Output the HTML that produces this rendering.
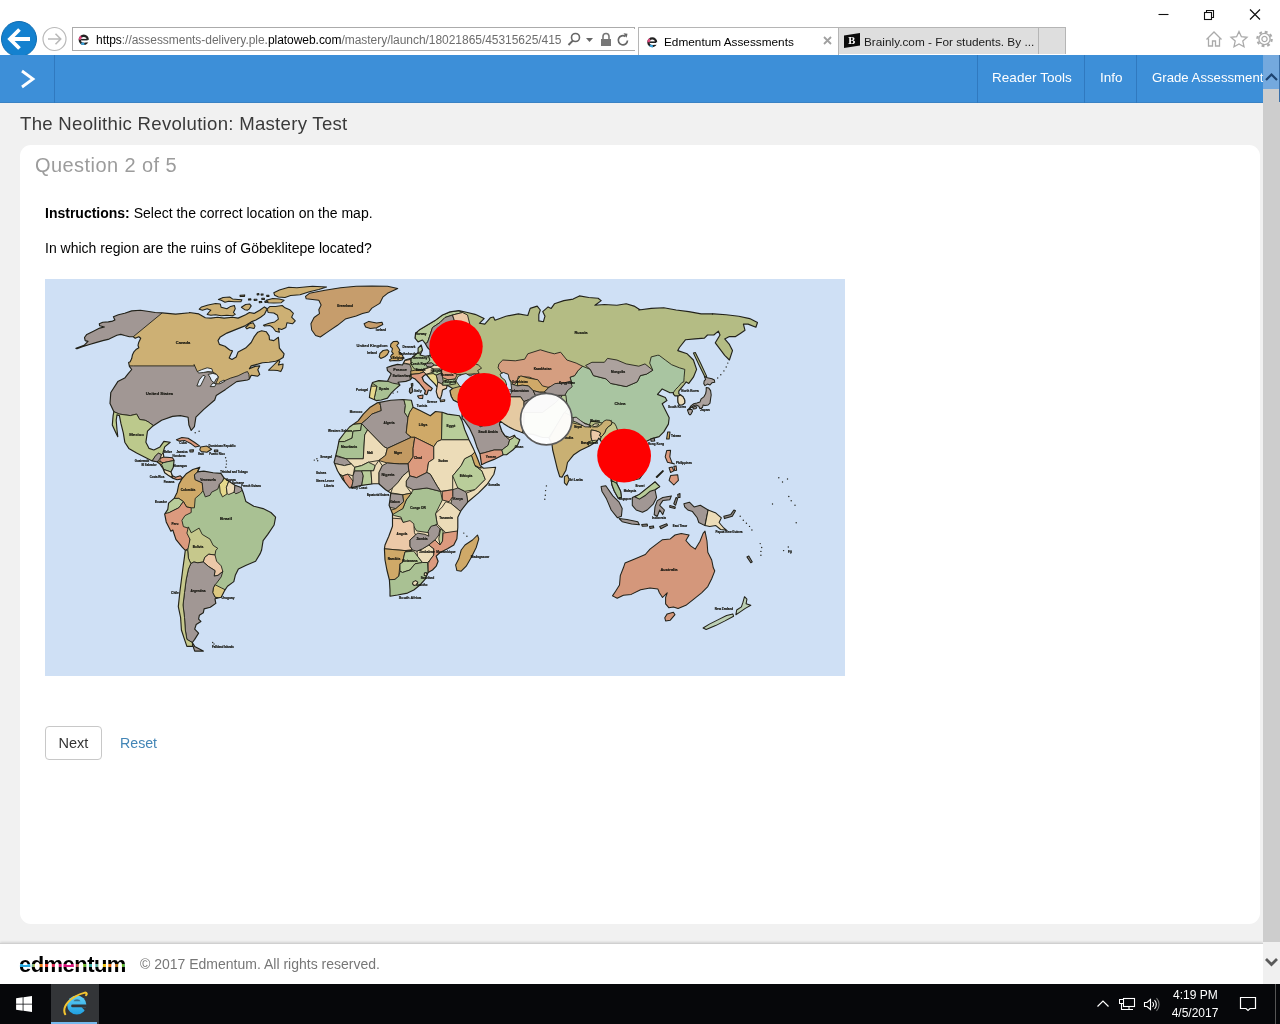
<!DOCTYPE html>
<html lang="en">
<head>
<meta charset="utf-8">
<title>Edmentum Assessments</title>
<style>
*{box-sizing:border-box;margin:0;padding:0}
html,body{width:1280px;height:1024px;overflow:hidden;background:#fff;font-family:"Liberation Sans",sans-serif}
.abs{position:absolute}
#chrome{position:absolute;left:0;top:0;width:1280px;height:56px;background:#fff}
#addr{position:absolute;left:72px;top:27px;width:563px;height:24px;border:1px solid #ababab;background:#fff}
#addr .url{position:absolute;left:23px;top:4.500px;font-size:12px;color:#6d6d6d;white-space:nowrap;letter-spacing:-0.04px}
#addr .url b{font-weight:normal;color:#000}
.tab{position:absolute;top:27px;height:29px;font-size:11.8px;color:#000;white-space:nowrap}
#tab1{left:638px;width:201px;background:#fff;border:1px solid #b5b5b5;border-bottom:none}
#tab2{left:839px;width:200px;background:#dedede;border:1px solid #b5b5b5;border-left:none;border-bottom:none;height:27px}
#tab3{left:1039px;width:27px;background:#dedede;border:1px solid #b5b5b5;border-left:none;border-bottom:none;height:27px}
#apphead{position:absolute;left:0;top:55px;width:1280px;height:48px;background:#3d8fd8;border-bottom:1px solid #3a82c4}
#apphead .it{position:absolute;top:0;height:48px;border-left:1px solid #3079bf;color:#fff;font-size:13.5px;line-height:46px;white-space:nowrap}
#pagebg{position:absolute;left:0;top:103px;width:1263px;height:840px;background:#f1f1f1}
#title{position:absolute;left:20px;top:112.6px;font-size:18.6px;color:#3a3a3a;white-space:nowrap;letter-spacing:0.28px}
#card{position:absolute;left:20px;top:145px;width:1240px;height:779px;background:#fff;border-radius:11px}
#qn{position:absolute;left:35px;top:153.5px;font-size:20px;color:#9c9c9c;white-space:nowrap;letter-spacing:0.43px}
.q{position:absolute;left:45px;font-size:14px;color:#000;white-space:nowrap}
#map{position:absolute;left:45px;top:279px;width:800px;height:397px;background:#cfe0f5;overflow:hidden}
#next{position:absolute;left:45px;top:726px;width:57px;height:34px;border:1px solid #c8c8c8;border-radius:4px;background:#fff;font-size:14.5px;color:#333;text-align:center;line-height:32px}
#reset{position:absolute;left:120px;top:735px;font-size:14.2px;color:#4285b6}
#footer{position:absolute;left:0;top:943px;width:1263px;height:41px;background:#fff;border-top:1px solid #d0d0d0;box-shadow:0 -1px 2px rgba(0,0,0,.12)}
#logo{position:absolute;left:19px;top:8.5px;font-size:22px;font-weight:bold;color:#000;letter-spacing:-0.55px;line-height:24px}
#copy{position:absolute;left:140px;top:12px;font-size:14px;color:#777;white-space:nowrap}
#sb{position:absolute;left:1263px;top:55px;width:17px;height:929px;background:#f0f0f0}
#task{position:absolute;left:0;top:984px;width:1280px;height:40px;background:#06070a}
#task .t{position:absolute;color:#fff;font-size:12px;white-space:nowrap}
</style>
</head>
<body>
<div id="chrome">
  <!-- back / forward -->
  <svg class="abs" style="left:0;top:19px" width="72" height="40" viewBox="0 0 72 40">
    <circle cx="19" cy="20" r="17.5" fill="#1481cf" stroke="#0f6cb0" stroke-width="1"/>
    <path d="M30 20H11M19.500 10.500l-9.500 9.500 9.500 9.500" fill="none" stroke="#fff" stroke-width="3.800" stroke-linecap="butt" stroke-linejoin="miter"/>
    <circle cx="54.5" cy="20" r="11.5" fill="#fff" stroke="#b9b9b9" stroke-width="1.2"/>
    <path d="M48 20h12.5M55.5 14.8l5.2 5.2-5.2 5.2" fill="none" stroke="#b9b9b9" stroke-width="1.6"/>
  </svg>
  <div id="addr">
    <svg class="abs" style="left:5px;top:6px" width="11.500" height="11.500" viewBox="0 0 15 15"><circle cx="7.5" cy="7.5" r="5.2" fill="none" stroke="#222" stroke-width="3"/><rect x="7" y="7.6" width="8" height="3.4" fill="#fff"/><rect x="4" y="6.4" width="8.5" height="2" fill="#222"/><path d="M2.3 7.5a5.2 5.2 0 0 1 2-4" stroke="#e0457b" stroke-width="3" fill="none"/><path d="M4.3 12a5.2 5.2 0 0 0 4 .6" stroke="#3aa3dc" stroke-width="3" fill="none"/></svg>
    <div class="url"><b>https</b>://assessments-delivery.ple.<b>platoweb.com</b>/mastery/launch/18021865/45315625/415</div>
    <div class="abs" style="left:488px;top:1px;width:74px;height:21px;background:#fff"></div>
    <svg class="abs" style="left:493px;top:3px" width="68" height="18" viewBox="0 0 68 18">
      <circle cx="9.5" cy="6.5" r="4" fill="none" stroke="#666" stroke-width="1.6"/><path d="M6.8 9.6L2.5 14" stroke="#666" stroke-width="2"/>
      <path d="M20 7h7l-3.5 4z" fill="#666"/>
      <rect x="35" y="8" width="10" height="7" fill="#777"/><path d="M37 8V5.5a3 3 0 0 1 6 0V8" fill="none" stroke="#777" stroke-width="1.6"/>
      <path d="M61.5 9.5a4.6 4.6 0 1 1-2-4" fill="none" stroke="#666" stroke-width="1.7"/><path d="M57.5 2.2l4 .6-.8 4z" fill="#666"/>
    </svg>
  </div>
  <div class="tab" id="tab1">
    <svg class="abs" style="left:7px;top:8px" width="12.500" height="12.500" viewBox="0 0 15 15"><circle cx="7.5" cy="7.5" r="4.6" fill="none" stroke="#222" stroke-width="2.8"/><rect x="7" y="7.6" width="8" height="3" fill="#fff"/><rect x="4" y="6.5" width="8" height="1.9" fill="#222"/><path d="M2.9 7.5a4.6 4.6 0 0 1 1.8-3.6" stroke="#e0457b" stroke-width="2.8" fill="none"/><path d="M4.6 11.4a4.6 4.6 0 0 0 3.6.6" stroke="#3aa3dc" stroke-width="2.8" fill="none"/></svg>
    <span class="abs" style="left:25px;top:7px">Edmentum Assessments</span>
    <svg class="abs" style="left:184px;top:8px" width="9" height="9" viewBox="0 0 9 9"><path d="M1 1l7 7M8 1L1 8" stroke="#a0a0a0" stroke-width="1.8"/></svg>
  </div>
  <div class="tab" id="tab2">
    <svg class="abs" style="left:5px;top:5px" width="17" height="15" viewBox="0 0 17 15"><path d="M0 2.5L16 0v12.5L0 15z" fill="#0b0b0b"/><text x="4.3" y="11.3" font-family="Liberation Serif,serif" font-weight="bold" font-size="10.5" fill="#fff">B</text></svg>
    <span class="abs" style="left:25px;top:7px;color:#1a1a1a">Brainly.com - For students. By ...</span>
  </div>
  <div class="tab" id="tab3"></div>
  <!-- window controls -->
  <svg class="abs" style="left:1150px;top:4px" width="125" height="22" viewBox="0 0 125 22">
    <path d="M8.5 10.5h10" stroke="#111" stroke-width="1.1"/>
    <rect x="54.5" y="8.5" width="7" height="7" fill="none" stroke="#111" stroke-width="1.1"/><path d="M56.5 8.5v-2h7v7h-2" fill="none" stroke="#111" stroke-width="1.1"/>
    <path d="M100 5.5l10 10M110 5.5l-10 10" stroke="#111" stroke-width="1.2"/>
  </svg>
  <!-- home star gear -->
  <svg class="abs" style="left:1204px;top:29px" width="72" height="20" viewBox="0 0 72 20">
    <path d="M2.5 10.5L10 3l7.500 7.500M4.500 9.500V17h4v-5h3v5h4V9.500" fill="none" stroke="#aaa" stroke-width="1.3"/>
    <path d="M35 2.500l2.400 5.200 5.600.6-4.200 3.800 1.200 5.600L35 14.900l-5 2.800 1.200-5.600L27 8.300l5.600-.6z" fill="none" stroke="#aaa" stroke-width="1.3" stroke-linejoin="miter"/>
    <g transform="translate(60.500 10)" fill="none" stroke="#aaa"><circle r="2.600" stroke-width="1.300"/><circle r="5.600" stroke-width="1.300"/><circle r="7.200" stroke-width="2.200" stroke-dasharray="2.830 2.830"/></g>
  </svg>
</div>

<div id="apphead">
  <svg class="abs" style="left:19px;top:14px" width="18" height="20" viewBox="0 0 18 20"><path d="M3 2l11 8-11 8" fill="none" stroke="#fff" stroke-width="2.800"/></svg>
  <div class="it" style="left:54px;width:1px"></div>
  <div class="it" style="left:977px;width:107px;padding-left:14px;letter-spacing:0.050px">Reader Tools</div>
  <div class="it" style="left:1084px;width:52px;padding-left:15px">Info</div>
  <div class="it" style="left:1136px;width:127px;padding-left:15px;overflow:hidden;font-size:13.2px">Grade Assessment</div>
</div>

<div id="pagebg"></div>
<div id="title">The Neolithic Revolution: Mastery Test</div>
<div id="card"></div>
<div id="qn">Question 2 of 5</div>
<div class="q" style="top:205px"><b>Instructions:</b> Select the correct location on the map.</div>
<div class="q" style="top:240px">In which region are the ruins of Göbeklitepe located?</div>

<div id="map">
<svg width="800" height="397" viewBox="45 279 800 397" style="position:absolute;left:0;top:0">
<rect x="45" y="279" width="800" height="397" fill="#cfe0f5"/>
<defs>
<clipPath id="cna"><path d="M75.9 348.4L84.1 345.3L88 341.4L85.2 340.6L84.5 337.5L86.8 334.4L93.4 331.2L99.7 328.1L104.4 327L99.7 325.8L99.3 323.8L102.8 322.3L108.3 321.9L112.6 321.1L114.9 319.9L113.4 316.8L118.4 314.8L124.7 313.3L131.7 310.9L140.3 310.2L147.3 311.3L155.2 312.5L162.2 312.9L175.6 314.1L189.7 312.8L189.4 312.5L198.8 313.9L205.3 317.7L210.9 318.1L217.5 317.2L224.1 318.1L232.5 317.2L238.1 318.1L245.6 314.8L249.4 312.5L254.1 313.4L259.7 310.2L264.4 306.9L267.2 308.8L264.4 314.4L260.6 317.2L255.9 320L251.2 321.9L245.6 325.6L236.2 329.4L226.9 333.1L220.3 336.9L218 340.6L219.4 344.4L225 346.2L229.7 350L232.5 350.9L230.6 354.7L229.2 358L232 359.4L236.2 357L238.1 351.9L245.6 348.1L251.2 342.5L254.1 336.9L257.8 332.2L261.6 330.8L266.2 331.7L269.1 335.9L269.5 339.7L273.8 340.6L278.4 337.3L278.9 342.5L279.4 348.1L284.1 353.8L283.1 357.5L279.4 359.8L275.6 361.2L269.1 362.2L262.5 362.7L257.8 364.1L251.2 365.9L249.4 368.8L255 366.4L259.7 365.9L257.8 369.7L259.7 374.4L257.8 376.2L251.2 375.3L249.4 379.1L247.5 380L236.6 381.6L225.6 389.4L216.2 395.6L214.7 400L203.8 409.4L195.9 417.2L194.4 426.6L191.2 430.5L188.9 425L188.1 417.2L180.3 415.6L172.5 416.4L161.6 420.3L152.2 426.6L147.5 431.2L145.9 442.2L149.1 448.4L153.8 450L160 446.9L163.9 441.4L170.2 442.2L164.7 446.9L163.1 452.3L163.9 457L172.5 457.8L174.1 460.2L173.3 467.2L170.9 471.9L172.5 475.8L175.6 477.3L180.3 475.8L182.7 478.1L181.9 478.9L177.2 479.7L172.5 478.1L167.8 475L164.7 472.7L163.1 468.8L160 464.1L156.9 461.7L152.2 460.9L145.9 457.8L136.6 453.1L128.8 448.4L124.8 442.2L123.3 432.8L120.9 423.4L119.4 415.6L117 414.8L116.2 420.3L117 429.7L117.8 436.7L116.2 433.6L112.3 425L113.1 415.6L113.9 411.7L110 403.4L110.8 392.5L117.8 381.6L124.7 378.1L127.8 374.2L131.7 369.5L129.4 366.4L128.6 362.5L130.2 361.7L131.7 358.6L132.5 354.7L134.1 351.6L136.4 349.2L138.8 347.7L138 345.3L138.8 342.2L140.7 338.3L138.8 336.7L135.2 338.3L133.3 336.7L129.4 336.7L124.7 335.5L120.8 334.4L116.9 335.2L113.8 336.7L109.1 339.1L102.8 340.6L95.8 342.6L89.5 344.5L81.7 346.9L77 348.8Z"/></clipPath>
<clipPath id="csa"><path d="M181.9 478.9L186.6 473.4L192.8 469.5L199.8 467.2L197.5 471.9L203.8 471.1L213.1 472.7L220.9 473.4L224.1 478.1L228.8 481.2L235 485.2L241.2 487.5L243.6 493.8L245.9 501.6L253.8 506.2L263.1 508.6L270.9 512.5L275.6 517.2L274.1 525L267.8 534.4L263.1 540.6L261.6 550L260.3 553.4L255.6 561.2L246.2 565.2L238.4 569.1L235.3 575.3L233.8 581.6L227.5 586.2L224.4 590.9L221.2 597.2L215 598.8L215.8 603.4L210.3 607.3L204.1 608.9L203.3 612.8L199.4 615.2L198.6 619.1L200.9 621.4L196.2 624.5L194.7 629.2L198.6 633.1L194.7 639.4L192.3 642.5L194.7 646.4L203.3 651.1L194.7 651.1L193.1 646.4L186.9 646.4L184.5 639.4L181.4 630L180.6 617.5L178.3 606.6L179.8 592.5L181.4 580L183 567.5L184.5 556.6L185.3 550.3L182.2 547.2L175.9 539.4L172.8 530L170.9 531.2L166.2 521.9L164.7 514.1L167.8 509.4L168.6 503.1L174.1 498.4L177.2 492.2L178.8 484.4Z"/></clipPath>
<clipPath id="caf"><path d="M377 402.9L390.8 400.3L402.8 399.5L411.4 400.3L413.1 407.2L420 410.6L430.3 415.8L435.5 411.5L442.3 412.3L447.5 414.1L459.5 415.8L462.1 420.9L464.7 429.5L469 439.8L473.3 448.4L477.6 458.8L480.2 465.6L483.6 468.2L495.6 467.3L493.9 474.2L487 484.5L478.4 493.1L468.1 501.7L461.2 510.3L457.8 517.2L457.8 527.5L457.5 531.2L456.9 538.8L453.8 545L447.5 548.8L440 552.5L436.2 556.2L438.1 561.2L436.2 566.2L432.5 570L428.1 572.5L425 579.4L420 585L413.8 590L407.5 593.1L397.5 595L390 596.2L390 590L389.4 580L386.9 570L385 560L384.4 548.8L385 545L388.8 536.2L392.5 526.2L392.5 515L392.5 513.8L389.1 505.2L389.9 500L390.8 493.1L385.6 489.7L378.8 483.7L373.6 483.7L361.6 485.4L349.5 488L342.7 479.4L337.5 470.8L334.1 462.2L335.8 455.3L337.5 448.4L339.2 439.8L344.4 433L349.5 427L358.1 420.9L363.3 414.1L370.2 407.2Z"/></clipPath>
<clipPath id="ceu"><path d="M376.2 400.6L369.4 397.5L370 392.5L371.2 386.2L372.5 382.5L378.8 380.6L387.5 381.2L391.2 373.8L387.5 370.6L386.9 367.5L392.5 365.6L397.5 364.4L402.5 365L405 360L411.9 358.1L412.5 356.9L418.1 352.5L418.1 348.1L421.2 345L422.5 350L420 355L425 356.2L430 355.6L430 350L427.5 347.5L425 343.1L422.5 340L418.1 341.9L415 338.1L415.6 333.1L420 329.4L427.5 325L435 320.6L442.5 315L450 311.9L458.8 310.6L467.5 312.5L475 314.4L476.2 314.7L484.1 318.6L479.4 323.3L484.8 324.1L490.3 317.8L493.4 317L495 320.2L505.9 316.2L518.4 313.9L527.8 315.5L530.2 308.4L537.2 306.1L540.3 310L538.8 314.7L538.8 320.9L543.4 321.7L545 316.2L542.7 311.6L548.1 306.9L551.2 308.4L554.4 303.8L563.8 300.6L573.1 299.1L579.4 295.9L588.8 297.5L598.1 298.3L601.2 300.6L595 305.3L604.4 304.5L616.9 305.3L626.2 303.8L634.1 306.1L640.3 310L638.8 310L651.2 308.4L663.8 307.7L676.2 310L688.8 311.6L701.2 313.9L713.8 313.9L726.2 314.7L738.8 316.2L749.7 318.6L757.5 322.5L755.9 327.2L748.1 324.1L743.4 324.1L745 330.3L740.3 333.4L735.6 336.6L729.4 336.6L724.7 338.9L729.4 344.4L732.5 350.6L729.4 360L724.7 355.3L720 349.1L715.3 342.8L720 335L718.4 331.1L713.8 335L707.5 335L704.4 338.1L695 338.9L685.6 339.7L679.4 347.5L677.8 350.6L687.2 353.8L693.4 360L696.6 369.4L693.4 377.2L688.8 383.4L686.2 381.9L683.8 385L681.2 388.1L678.8 391.2L678.8 393.8L680.6 395L683.1 396.9L684.7 400L684.7 403.1L682.5 404.7L679.4 405L678.1 402.5L677.8 398.8L678.1 395.9L675 395.9L673.4 394.1L673.4 392.5L670 392.8L662.2 388.9L657.5 394.4L665.3 397.5L666.9 400.6L662.2 403.8L665.3 410L669.2 417.8L668.4 424.1L663.8 431.9L659.1 436.6L651.2 438.9L646.6 441.2L642.5 443.6L637.8 445.9L634.7 450.6L637.8 456.9L642.5 463.1L644.1 472.5L639.4 478.8L633.1 480.3L631.6 475.6L626.9 472.5L623.8 469.4L620.6 472.5L617.5 478.8L616.7 483.4L620.6 491.2L621.4 497.5L618.3 498.3L614.4 491.2L612 485L611.2 480.3L609.7 472.5L608.1 464.7L606.6 456.9L603.4 449.1L601.1 441.2L598.8 438.1L597.2 441.2L589.4 445.9L580 450.6L573.8 454.7L567.5 462.5L565.9 470.3L562 477.3L559.7 476.6L557.3 468.8L555 459.4L552.7 450L551.9 443.8L548.8 437.5L542.5 437.5L533.1 434.4L525.3 433.6L520.6 432L514.4 429.7L508.1 426.6L503.4 423.4L500.3 421.1L499.5 424.2L501.9 431.2L505 435.9L509.7 437.5L514.4 435.2L515.9 437.5L519.8 439.8L517.5 445.3L512.8 450L506.6 454.7L503.4 454.7L494.1 459.4L486.2 462.5L481.6 464.8L480 453.9L476.9 446.9L473.8 437.5L469.4 428.1L463.6 419.5L462 418.8L462 414.1L465.9 406.2L468.3 398.4L458.1 402.5L453.4 400.2L451.1 396.2L449.9 390.8L452.7 388.4L447.2 385.3L446.4 388.4L442.5 390L441.7 394.7L440.2 399.4L437.8 397L436.2 391.6L437 386.9L434.7 383.8L430 379.1L426.1 374.4L424.5 375.2L422.2 377.5L423.8 381.4L428.4 385.3L432.3 388.4L430.8 390.8L428.4 390L426.9 394.7L424.5 393.9L425.3 390.8L422.2 386.9L419.1 383L415.2 379.1L412 377.5L410.5 379.8L405.8 381.4L398 382.2L400 385L395 389.4L391.2 393.1L387.5 398.1L381.2 400Z"/></clipPath>
</defs>
<g stroke="#22221a" stroke-width="0.9" stroke-linejoin="round">
<g clip-path="url(#ceu)"><path d="M376.2 400.6L369.4 397.5L370 392.5L371.2 386.2L372.5 382.5L378.8 380.6L387.5 381.2L391.2 373.8L387.5 370.6L386.9 367.5L392.5 365.6L397.5 364.4L402.5 365L405 360L411.9 358.1L412.5 356.9L418.1 352.5L418.1 348.1L421.2 345L422.5 350L420 355L425 356.2L430 355.6L430 350L427.5 347.5L425 343.1L422.5 340L418.1 341.9L415 338.1L415.6 333.1L420 329.4L427.5 325L435 320.6L442.5 315L450 311.9L458.8 310.6L467.5 312.5L475 314.4L476.2 314.7L484.1 318.6L479.4 323.3L484.8 324.1L490.3 317.8L493.4 317L495 320.2L505.9 316.2L518.4 313.9L527.8 315.5L530.2 308.4L537.2 306.1L540.3 310L538.8 314.7L538.8 320.9L543.4 321.7L545 316.2L542.7 311.6L548.1 306.9L551.2 308.4L554.4 303.8L563.8 300.6L573.1 299.1L579.4 295.9L588.8 297.5L598.1 298.3L601.2 300.6L595 305.3L604.4 304.5L616.9 305.3L626.2 303.8L634.1 306.1L640.3 310L638.8 310L651.2 308.4L663.8 307.7L676.2 310L688.8 311.6L701.2 313.9L713.8 313.9L726.2 314.7L738.8 316.2L749.7 318.6L757.5 322.5L755.9 327.2L748.1 324.1L743.4 324.1L745 330.3L740.3 333.4L735.6 336.6L729.4 336.6L724.7 338.9L729.4 344.4L732.5 350.6L729.4 360L724.7 355.3L720 349.1L715.3 342.8L720 335L718.4 331.1L713.8 335L707.5 335L704.4 338.1L695 338.9L685.6 339.7L679.4 347.5L677.8 350.6L687.2 353.8L693.4 360L696.6 369.4L693.4 377.2L688.8 383.4L686.2 381.9L683.8 385L681.2 388.1L678.8 391.2L678.8 393.8L680.6 395L683.1 396.9L684.7 400L684.7 403.1L682.5 404.7L679.4 405L678.1 402.5L677.8 398.8L678.1 395.9L675 395.9L673.4 394.1L673.4 392.5L670 392.8L662.2 388.9L657.5 394.4L665.3 397.5L666.9 400.6L662.2 403.8L665.3 410L669.2 417.8L668.4 424.1L663.8 431.9L659.1 436.6L651.2 438.9L646.6 441.2L642.5 443.6L637.8 445.9L634.7 450.6L637.8 456.9L642.5 463.1L644.1 472.5L639.4 478.8L633.1 480.3L631.6 475.6L626.9 472.5L623.8 469.4L620.6 472.5L617.5 478.8L616.7 483.4L620.6 491.2L621.4 497.5L618.3 498.3L614.4 491.2L612 485L611.2 480.3L609.7 472.5L608.1 464.7L606.6 456.9L603.4 449.1L601.1 441.2L598.8 438.1L597.2 441.2L589.4 445.9L580 450.6L573.8 454.7L567.5 462.5L565.9 470.3L562 477.3L559.7 476.6L557.3 468.8L555 459.4L552.7 450L551.9 443.8L548.8 437.5L542.5 437.5L533.1 434.4L525.3 433.6L520.6 432L514.4 429.7L508.1 426.6L503.4 423.4L500.3 421.1L499.5 424.2L501.9 431.2L505 435.9L509.7 437.5L514.4 435.2L515.9 437.5L519.8 439.8L517.5 445.3L512.8 450L506.6 454.7L503.4 454.7L494.1 459.4L486.2 462.5L481.6 464.8L480 453.9L476.9 446.9L473.8 437.5L469.4 428.1L463.6 419.5L462 418.8L462 414.1L465.9 406.2L468.3 398.4L458.1 402.5L453.4 400.2L451.1 396.2L449.9 390.8L452.7 388.4L447.2 385.3L446.4 388.4L442.5 390L441.7 394.7L440.2 399.4L437.8 397L436.2 391.6L437 386.9L434.7 383.8L430 379.1L426.1 374.4L424.5 375.2L422.2 377.5L423.8 381.4L428.4 385.3L432.3 388.4L430.8 390.8L428.4 390L426.9 394.7L424.5 393.9L425.3 390.8L422.2 386.9L419.1 383L415.2 379.1L412 377.5L410.5 379.8L405.8 381.4L398 382.2L400 385L395 389.4L391.2 393.1L387.5 398.1L381.2 400Z" fill="#b4bc84" stroke="none"/>
<path d="M582.5 366.2L590.3 369.4L593.4 375.6L605.9 378.8L610.6 383.4L626.2 386.6L637.2 381.9L640.3 375.6L646.6 374.1L652.8 370.2L649.7 363.1L651.2 356.9L657.5 355.3L659.1 355.3L665.3 360L671.6 364.7L679.4 367.8L684.8 369.4L684.1 377.2L683.8 381.9L681.9 382.5L678.8 386.2L675.6 389.4L673.4 392.5L672.5 403.8L685.6 456.9L626.9 456.9L603.4 449.1L612.8 425L611.2 420.3L605 423.4L590.9 421.1L589.4 425L573.8 418.8L570.6 415.6L564.4 395.3L571.6 382.7L570 377.2L574.7 375.6L577.8 370.9Z" fill="#a9c5a1"/>
<path d="M585.6 365.5L591.9 362.3L604.4 362.3L607.5 358.4L616.9 360L626.2 363.9L638.8 366.2L645 363.9L652.8 370.2L646.6 374.1L640.3 375.6L637.2 381.9L626.2 386.6L610.6 383.4L605.9 378.8L593.4 375.6L590.3 369.4Z" fill="#aca29e"/>
<path d="M498.9 363.9L502.8 360L515.3 360.8L524.7 359.2L527.8 353.8L540.3 349.8L548.1 352.2L554.4 353.8L560.6 352.2L566.9 360L576.2 363.1L582.5 366.2L577.8 370.9L574.7 375.6L570 377.2L571.6 382.7L563.8 385L557.5 383.4L551.2 386.6L545 388.1L540.3 385L537.2 380.3L529.4 377.2L518.4 376.4L516.9 381.9L513.8 385L509.1 378.8L507.5 374.1L501.2 372.5L498.1 367.8Z" fill="#d59e80"/>
<path d="M517.5 379.7L520.6 375.8L528.4 378.1L537.8 379.7L542.5 385.9L548.8 387.5L544.1 392.2L539.4 392.2L533.1 390.6L528.4 385.9L522.2 385.2L517.5 385.9Z" fill="#cfa968"/>
<path d="M508.1 383.6L512.8 384.4L517.5 385.9L522.2 385.2L528.4 385.9L533.1 390.6L536.2 396.9L523.8 401.6L520.6 396.9L509.7 396.9L508.9 390.6Z" fill="#a19794"/>
<path d="M548.8 387.5L555 383.6L564.4 382.8L570.6 381.2L572.2 386.7L567.5 390.6L564.4 396.1L550.3 395.3L544.1 392.2Z" fill="#a19794"/>
<path d="M536.2 396.9L533.1 390.6L539.4 392.2L544.1 392.2L550.3 395.3L562.8 395.3L555 403.1L542.5 412.5L523.8 412.5L523.8 401.6Z" fill="#a19794"/>
<path d="M523.8 412.5L542.5 412.5L555 403.1L562.8 395.3L565.9 395.3L567.5 409.4L564.4 412.5L555 428.1L548.8 437.5L542.5 439.1L522.2 434.4L523.8 423.4Z" fill="#b9cd9a"/>
<path d="M506.6 395.3L509.7 396.9L520.6 396.9L523.8 401.6L523.8 412.5L523.8 423.4L522.2 434.4L514.4 431.2L508.1 428.1L503.4 425L500.3 421.9L494.1 412.5L492.5 401.6L497.2 395.3Z" fill="#e5caa2"/>
<path d="M548.8 439.1L555 428.1L564.4 412.5L570.6 415.6L572.2 422.8L589.4 426.9L590.6 427.5L590 425L592.5 426.9L597.5 426.9L600.6 425L603.8 421.2L606.2 420L610 420.3L611.9 422.5L611.2 425L608.1 426.9L606.2 429.4L605 432.5L603.1 435L601.2 436.9L599.4 435.6L600.6 433.1L598.8 431.9L595 430.6L591.2 430L590.9 433.8L591.2 437.5L591.9 440.6L587.5 442.5L595.6 459.4L564.4 490.6L545.6 475L542.5 443.8Z" fill="#c9b073"/>
<path d="M573.1 417.5L576.2 417.2L580.6 420.6L585 423.8L589.4 425L589.4 426.9L585 426.9L580.6 424.4L575.6 421.9L573.1 421.2Z" fill="#bdb6b6"/>
<path d="M592.5 425L595 423.8L598.8 424.1L597.5 425.9L593.8 426.6Z" fill="#ecdcb8"/>
<path d="M591.2 430L595 430.6L598.8 431.9L600.6 433.1L599.4 435.6L601.2 436.9L600 440.6L595.6 440.3L591.9 440.6L591.2 437.5L590.9 433.8Z" fill="#ecc9a8"/>
<path d="M611.9 422.5L611.2 425L608.1 426.9L606.2 429.4L605 432.5L603.1 435L601.2 436.9L600 440.6L603.8 445L611.2 480.3L626.9 456.9L616.2 426.2L614.4 423.1Z" fill="#c6c88c"/>
<path d="M461.2 418.8L464.4 412.5L486.2 409.4L500.3 421.1L499.5 424.2L501.9 431.2L505 435.9L509.7 439.8L508.1 445.3L501.9 450L494.1 450L483.1 453.1L478.4 453.9L470.6 456.2L458.1 428.1Z" fill="#a19794"/>
<path d="M470.6 456.2L478.4 453.9L483.1 453.1L494.1 450L501.9 450L503.4 455.5L494.1 462.5L478.4 468.8Z" fill="#dc9a7e"/>
<path d="M509.7 439.8L508.1 445.3L501.9 450L503.4 455.5L509.7 456.2L523.8 443.8L522.2 437.5L516.7 433.6L513.6 437.5Z" fill="#b9cd9a"/>
<path d="M501.9 431.2L505 435.9L509.7 439.8L513.6 437.5L514.4 434.4L508.1 435.2Z" fill="#ecdcb8"/>
<path d="M468.3 398.4L473.8 395.3L486.2 396.9L494.1 403.1L494.1 412.5L486.2 409.4L470.6 412.5L464.4 412.5L465.9 406.2Z" fill="#cfa968"/>
<path d="M449.9 390.8L452.7 388.4L458.1 386.9L465.9 385.3L480 383.8L480 399.4L458.1 402.5L453.4 400.2L451.1 396.2Z" fill="#cfa968"/>
<path d="M478.4 423.4L482.3 422.7L483.1 425.8L480 426.9Z" fill="#a9c193"/>
<path d="M383.9 367.3L394.1 365L401.9 363.4L409.7 364.2L411.2 368.1L411.2 372.8L409.7 375.9L410.5 380.6L405.8 383.8L398 384.5L384.7 382.6L384.7 371.2Z" fill="#a19794"/>
<path d="M367.5 380L378.8 380.6L387.5 381.2L392.5 383.1L402.5 385L395 391.2L387.5 400L375 403.8L374.4 397.5L376.9 386.2Z" fill="#a9c193"/>
<path d="M367.5 386.2L376.9 386.2L374.4 397.5L375 403.8L367.5 400Z" fill="#e6d98c"/>
<path d="M401.9 362.7L405.8 360.3L410.5 359.5L411.2 363.4L409.7 364.2L405.8 363.4Z" fill="#ecc9a8"/>
<path d="M411.2 358.8L417.5 353.3L423.8 353.3L428.4 355.6L430 360.3L426.9 363.4L428.4 367.3L422.2 369.7L414.4 368.9L412 365.8L411.2 363.4Z" fill="#a9c193"/>
<path d="M418.3 343.1L423.8 342.3L424.5 348.6L420.6 351.7L417.5 353.3L417.5 348.6Z" fill="#b9cd9a"/>
<path d="M410.5 371.2L415.2 370.1L422.2 370.1L423.8 372L419.1 373.6L411.2 374.4Z" fill="#cfa968"/>
<path d="M425.3 363.4L431.6 362.7L434.7 365L430.8 367L426.9 366.6Z" fill="#a19794"/>
<path d="M422.2 370.1L430 367.3L433.9 368.9L433.1 372L426.1 374.4L423.8 372Z" fill="#ecdcb8"/>
<path d="M411.2 374.4L419.1 373.6L423.8 372L426.1 374.4L424.5 375.2L422.2 377.5L423.8 381.4L428.4 385.3L433.1 388.4L430.8 391.6L428.4 390.8L426.9 395.5L423.8 394.7L425.3 390.8L422.2 386.9L419.1 383L415.2 379.1L411.2 378.3Z" fill="#dc9a7e"/>
<path d="M433.9 368.9L439.4 368.9L441.7 372.8L436.2 375.2L433.1 373.6L433.1 372Z" fill="#b9cd9a"/>
<path d="M430.8 367L434.7 365L442.5 365.8L441.7 368.9L433.9 368.9L430 367.3Z" fill="#ecdcb8"/>
<path d="M428.4 355.6L442.5 354.1L444.1 363.4L442.5 365.8L434.7 365L431.6 362.7L426.9 363.4L430 360.3Z" fill="#b9cd9a"/>
<path d="M441.7 372.8L441.7 368.9L450.3 371.2L457.3 374.4L455 379.1L448 379.8L442.5 377.5Z" fill="#dc9a7e"/>
<path d="M442.5 365.8L458.1 363.4L472.2 362.7L478.4 365L481.6 368.1L477.7 370.5L479.2 373.6L465.9 374.4L457.3 374.4L450.3 371.2L441.7 368.9Z" fill="#bab37c"/>
<path d="M436.2 375.2L441.7 372.8L442.5 377.5L443.3 381.4L441.7 383.8L437.8 382.2Z" fill="#a19794"/>
<path d="M426.1 374.4L433.1 373.6L436.2 375.2L437.8 382.2L437 386.9L434.7 384.5L430 379.1Z" fill="#e6d98c"/>
<path d="M443.3 381.4L448 379.8L455 379.1L455.8 383.8L447.2 385.3L442.5 385.3Z" fill="#a9c193"/>
<path d="M437 386.9L437.8 382.2L441.7 383.8L442.5 385.3L447.2 385.3L448 390L442.5 390.8L442.5 402.5L434.7 402.5L434.7 388.4Z" fill="#ecc9a8"/>
<path d="M412.5 341.2L415 337.5L415.6 333.1L420 329.4L427.5 325L435 320.6L442.5 315L450 311.9L458.8 310.6L462.5 312.5L452.5 315L445 317.5L440 322.5L432.5 327.5L430 335L427.5 342.5L425 343.8L418.1 342.5Z" fill="#b9cd9a"/>
<path d="M425 343.8L427.5 342.5L430 335L432.5 327.5L440 322.5L445 317.5L452.5 315L455 322.5L450 332.5L445 341.2L437.5 352.5L430 352.5L426.2 347.5Z" fill="#a19794"/>
<path d="M452.5 315L462.5 312.5L467.5 315L470 325L465 335L455 336.2L450 332.5L455 322.5Z" fill="#ecc9a8"/>
</g>
<path d="M376.2 400.6L369.4 397.5L370 392.5L371.2 386.2L372.5 382.5L378.8 380.6L387.5 381.2L391.2 373.8L387.5 370.6L386.9 367.5L392.5 365.6L397.5 364.4L402.5 365L405 360L411.9 358.1L412.5 356.9L418.1 352.5L418.1 348.1L421.2 345L422.5 350L420 355L425 356.2L430 355.6L430 350L427.5 347.5L425 343.1L422.5 340L418.1 341.9L415 338.1L415.6 333.1L420 329.4L427.5 325L435 320.6L442.5 315L450 311.9L458.8 310.6L467.5 312.5L475 314.4L476.2 314.7L484.1 318.6L479.4 323.3L484.8 324.1L490.3 317.8L493.4 317L495 320.2L505.9 316.2L518.4 313.9L527.8 315.5L530.2 308.4L537.2 306.1L540.3 310L538.8 314.7L538.8 320.9L543.4 321.7L545 316.2L542.7 311.6L548.1 306.9L551.2 308.4L554.4 303.8L563.8 300.6L573.1 299.1L579.4 295.9L588.8 297.5L598.1 298.3L601.2 300.6L595 305.3L604.4 304.5L616.9 305.3L626.2 303.8L634.1 306.1L640.3 310L638.8 310L651.2 308.4L663.8 307.7L676.2 310L688.8 311.6L701.2 313.9L713.8 313.9L726.2 314.7L738.8 316.2L749.7 318.6L757.5 322.5L755.9 327.2L748.1 324.1L743.4 324.1L745 330.3L740.3 333.4L735.6 336.6L729.4 336.6L724.7 338.9L729.4 344.4L732.5 350.6L729.4 360L724.7 355.3L720 349.1L715.3 342.8L720 335L718.4 331.1L713.8 335L707.5 335L704.4 338.1L695 338.9L685.6 339.7L679.4 347.5L677.8 350.6L687.2 353.8L693.4 360L696.6 369.4L693.4 377.2L688.8 383.4L686.2 381.9L683.8 385L681.2 388.1L678.8 391.2L678.8 393.8L680.6 395L683.1 396.9L684.7 400L684.7 403.1L682.5 404.7L679.4 405L678.1 402.5L677.8 398.8L678.1 395.9L675 395.9L673.4 394.1L673.4 392.5L670 392.8L662.2 388.9L657.5 394.4L665.3 397.5L666.9 400.6L662.2 403.8L665.3 410L669.2 417.8L668.4 424.1L663.8 431.9L659.1 436.6L651.2 438.9L646.6 441.2L642.5 443.6L637.8 445.9L634.7 450.6L637.8 456.9L642.5 463.1L644.1 472.5L639.4 478.8L633.1 480.3L631.6 475.6L626.9 472.5L623.8 469.4L620.6 472.5L617.5 478.8L616.7 483.4L620.6 491.2L621.4 497.5L618.3 498.3L614.4 491.2L612 485L611.2 480.3L609.7 472.5L608.1 464.7L606.6 456.9L603.4 449.1L601.1 441.2L598.8 438.1L597.2 441.2L589.4 445.9L580 450.6L573.8 454.7L567.5 462.5L565.9 470.3L562 477.3L559.7 476.6L557.3 468.8L555 459.4L552.7 450L551.9 443.8L548.8 437.5L542.5 437.5L533.1 434.4L525.3 433.6L520.6 432L514.4 429.7L508.1 426.6L503.4 423.4L500.3 421.1L499.5 424.2L501.9 431.2L505 435.9L509.7 437.5L514.4 435.2L515.9 437.5L519.8 439.8L517.5 445.3L512.8 450L506.6 454.7L503.4 454.7L494.1 459.4L486.2 462.5L481.6 464.8L480 453.9L476.9 446.9L473.8 437.5L469.4 428.1L463.6 419.5L462 418.8L462 414.1L465.9 406.2L468.3 398.4L458.1 402.5L453.4 400.2L451.1 396.2L449.9 390.8L452.7 388.4L447.2 385.3L446.4 388.4L442.5 390L441.7 394.7L440.2 399.4L437.8 397L436.2 391.6L437 386.9L434.7 383.8L430 379.1L426.1 374.4L424.5 375.2L422.2 377.5L423.8 381.4L428.4 385.3L432.3 388.4L430.8 390.8L428.4 390L426.9 394.7L424.5 393.9L425.3 390.8L422.2 386.9L419.1 383L415.2 379.1L412 377.5L410.5 379.8L405.8 381.4L398 382.2L400 385L395 389.4L391.2 393.1L387.5 398.1L381.2 400Z" fill="none" stroke-width="1.15"/>
<path d="M456 381L458 376.5L462 374.5L466 373.5L470 376L474 374L478 375.5L476 378L484 378.5L490 381.5L486 386L476 387.5L466 387.5L460 386.5Z" fill="#cfe0f5"/>
<path d="M503.6 372.5L508.3 374.4L509.1 378.8L510.9 382.7L511.9 391.2L509.8 395.9L505.9 395.2L505.2 388.1L506.7 385L505.2 380.3L501.2 377.2L500 374.1Z" fill="#cfe0f5"/>
<path d="M430 355.6L435 353.8L440 347.5L445 341.2L450 337.5L448.8 345L442.5 352.5L445 357.5L437.5 358.8L431.2 357.5Z" fill="#cfe0f5"/>
<g clip-path="url(#caf)"><path d="M377 402.9L390.8 400.3L402.8 399.5L411.4 400.3L413.1 407.2L420 410.6L430.3 415.8L435.5 411.5L442.3 412.3L447.5 414.1L459.5 415.8L462.1 420.9L464.7 429.5L469 439.8L473.3 448.4L477.6 458.8L480.2 465.6L483.6 468.2L495.6 467.3L493.9 474.2L487 484.5L478.4 493.1L468.1 501.7L461.2 510.3L457.8 517.2L457.8 527.5L457.5 531.2L456.9 538.8L453.8 545L447.5 548.8L440 552.5L436.2 556.2L438.1 561.2L436.2 566.2L432.5 570L428.1 572.5L425 579.4L420 585L413.8 590L407.5 593.1L397.5 595L390 596.2L390 590L389.4 580L386.9 570L385 560L384.4 548.8L385 545L388.8 536.2L392.5 526.2L392.5 515L392.5 513.8L389.1 505.2L389.9 500L390.8 493.1L385.6 489.7L378.8 483.7L373.6 483.7L361.6 485.4L349.5 488L342.7 479.4L337.5 470.8L334.1 462.2L335.8 455.3L337.5 448.4L339.2 439.8L344.4 433L349.5 427L358.1 420.9L363.3 414.1L370.2 407.2Z" fill="#ecdcb8" stroke="none"/>
<path d="M375.3 396.9L380.5 405.5L381.3 410.6L371.9 414.1L366.7 419.2L361.6 423.5L353 424.4L344.4 420.9L361.6 400.3Z" fill="#c39a62"/>
<path d="M353 424.4L361.6 423.5L360.7 430.4L353 431.2L352.1 438.1L344.4 441.6L330.6 441.6L335.8 424.4Z" fill="#b9cd9a"/>
<path d="M360.7 430.4L361.6 423.5L367.6 429.9L364.7 435L363.3 458.8L346.1 458.8L335.8 455.3L327.2 451.9L330.6 441.6L344.4 441.6L352.1 438.1L353 431.2Z" fill="#a9c193"/>
<path d="M381.3 410.6L380.5 405.5L378.8 396.9L402.8 395.2L405.4 405.5L404.5 412.3L408 417.5L406.2 433L411.4 437.3L387.3 448.4L383.9 446.7L361.6 423.5L366.7 419.2L371.9 414.1Z" fill="#a19794"/>
<path d="M402.8 395.2L416.6 395.2L413.1 407.2L409.7 412.3L408 417.5L404.5 412.3L405.4 405.5Z" fill="#b9cd9a"/>
<path d="M408 417.5L409.7 412.3L413.1 407.2L416.6 403.8L442.3 407.2L441.5 439.8L437.2 441.6L433.8 446.7L414.8 437.3L411.4 437.3L406.2 433Z" fill="#cfa968"/>
<path d="M442.3 407.2L464.7 410.6L475 439.8L441.5 439.8Z" fill="#b9cd9a"/>
<path d="M364.7 435L367.6 429.9L383.9 446.7L387.3 448.4L385.6 455.3L378.8 460.5L368.4 462.2L361.6 465.6L354.7 467.3L346.1 458.8L363.3 458.8Z" fill="#ecdcb8"/>
<path d="M387.3 448.4L411.4 437.3L414.8 437.3L413.1 448.4L413.1 457L408 463.9L399.4 463.9L387.3 463L378.8 460.5L385.6 455.3Z" fill="#c39a62"/>
<path d="M414.8 437.3L433.8 446.7L433.8 458.8L428.6 462.2L426.9 472.5L416.6 477.7L409.7 475.9L408.8 470.8L408 463.9L413.1 457L413.1 448.4Z" fill="#dc9a7e"/>
<path d="M433.8 446.7L437.2 441.6L441.5 439.8L475 439.8L475 451.9L471.6 455.3L464.7 458.8L461.2 465.6L452.7 475.9L452.7 489.7L440.6 491.4L437.2 486.2L430.3 474.2L426.9 472.5L428.6 462.2L433.8 458.8Z" fill="#ecdcb8"/>
<path d="M464.7 458.8L471.6 455.3L475 465.6L481.9 470.8L485.3 479.4L475 489.7L464.7 491.4L457.8 488L452.7 475.9L461.2 465.6Z" fill="#b9cd9a"/>
<path d="M471.6 455.3L475 451.9L481.9 465.6L480.2 468.2L475 465.6Z" fill="#cfa968"/>
<path d="M475 465.6L480.2 468.2L499.1 463.9L499.1 475.9L468.1 506.9L466.4 493.1L475 489.7L485.3 479.4L481.9 470.8Z" fill="#ecdcb8"/>
<path d="M452.7 489.7L457.8 488L464.7 491.4L466.4 493.1L468.1 503.4L461.2 512L450.9 503.4L452.7 496.6Z" fill="#a19794"/>
<path d="M442.3 491.4L452.7 489.7L452.7 496.6L449.2 501.7L442.3 500Z" fill="#dc9a7e"/>
<path d="M442.3 506.9L445.8 501.7L450.9 503.4L461.2 512L464.7 532.7L445.8 532.7L437.2 524.1L435.5 513.8Z" fill="#ecdcb8"/>
<path d="M413.1 489.7L426.9 488L440.6 491.4L442.3 500L438.9 506.9L435.5 513.8L437.2 524.1L430.3 527.5L428.6 532.7L416.6 530.9L411.4 522.3L402.8 522.3L401.1 517.2L394.2 515.5L390.8 513.8L402.8 508.6L406.2 500L411.4 493.1Z" fill="#a9c193"/>
<path d="M409.7 475.9L416.6 477.7L426.9 472.5L430.3 474.2L437.2 486.2L440.6 491.4L426.9 488L413.1 489.7L406.2 486.2L406.2 481.1Z" fill="#a19794"/>
<path d="M382.2 465.6L387.3 463L399.4 463.9L408 463.9L408.8 470.8L402.8 475.9L397.7 482.8L392.5 488L385.6 493.1L378.8 486.2L378.8 472.5Z" fill="#a19794"/>
<path d="M408.8 470.8L409.7 475.9L406.2 481.1L406.2 486.2L411.4 493.1L402.8 494.8L392.5 493.1L390.8 493.1L392.5 488L397.7 482.8L402.8 475.9Z" fill="#ecdcb8"/>
<path d="M387.3 493.1L402.8 494.8L403.7 501.7L395.9 508.6L387.3 506.9Z" fill="#a19794"/>
<path d="M402.8 494.8L411.4 493.1L406.2 500L402.8 508.6L392.5 514.6L390.8 510.3L395.9 508.6L403.7 501.7Z" fill="#cfa968"/>
<path d="M332.3 455.3L346.1 458.8L351.2 463.9L344.4 465.6L332.3 463Z" fill="#a19794"/>
<path d="M332.3 463L344.4 465.6L351.2 463.9L354.7 467.3L353 475.9L347.8 474.2L342.7 475.9L334.1 470.8Z" fill="#ecdcb8"/>
<path d="M335.8 472.5L342.7 475.9L344.4 481.1L337.5 479.4Z" fill="#a9c193"/>
<path d="M344.4 481.1L342.7 475.9L347.8 474.2L353 481.1L351.2 489.7L347.8 488.8Z" fill="#dc9a7e"/>
<path d="M353 475.9L354.7 470.8L361.6 470.8L363.3 475.9L361.6 486.2L351.2 489.7L353 481.1Z" fill="#a19794"/>
<path d="M354.7 467.3L361.6 465.6L368.4 462.2L375.3 465.6L373.6 470.8L361.6 470.8L354.7 470.8Z" fill="#b9cd9a"/>
<path d="M363.3 475.9L361.6 470.8L371 470.8L371.9 484.5L361.6 486.2Z" fill="#b9cd9a"/>
<path d="M371 470.8L373.6 470.8L375.3 465.6L378.8 460.5L382.2 465.6L378.8 472.5L378.8 486.2L371.9 484.5Z" fill="#ecdcb8"/>
<path d="M382.5 517.5L401.2 518.8L403.1 522.5L410 520.6L413.8 523.8L414.4 532.5L415.6 535L410 540L410 546.2L412.5 550L405 550.6L384.4 548.8L378.8 547.5Z" fill="#ecc9a8"/>
<path d="M378.8 548.1L384.4 548.8L405 550.6L412.5 550L405 551.9L402.5 562.5L400 563.8L398.8 576.2L395 579.4L389.4 580L378.8 580Z" fill="#cfa968"/>
<path d="M405 551.9L413.8 551.2L417.5 556.2L422.5 562.5L415 563.8L410 570L406.2 571.2L402.5 572.5L400 571.2L400 563.8L402.5 562.5Z" fill="#b9cd9a"/>
<path d="M416.9 551.2L422.5 548.8L428.8 545L433.8 548.8L433.8 555L430 560L427.5 562.5L422.5 562.5L417.5 556.2Z" fill="#ecdcb8"/>
<path d="M410 540L415.6 535L417.5 533.1L425 534.4L428.8 536.2L428.1 531.2L431.2 526.2L436.2 525L440 528.8L438.8 535L435 540L428.8 545L422.5 548.8L416.9 551.2L412.5 550L410 546.2Z" fill="#a19794"/>
<path d="M440.6 528.8L443.1 531.2L442.5 541.2L440 545L438.8 538.8Z" fill="#b9cd9a"/>
<path d="M443.1 533.1L460 530.6L460 547.5L440 570L428.1 575L428.1 563.8L430 560L433.8 555L433.8 548.8L428.8 545L435 540L440 545L442.5 541.2Z" fill="#dc9a7e"/>
<path d="M385 580L395 579.4L398.8 576.2L400 571.2L402.5 572.5L406.2 571.2L410 570L415 563.8L422.5 562.5L427.5 562.5L428.1 575L430 597.5L385 600Z" fill="#a9c193"/>
</g>
<path d="M377 402.9L390.8 400.3L402.8 399.5L411.4 400.3L413.1 407.2L420 410.6L430.3 415.8L435.5 411.5L442.3 412.3L447.5 414.1L459.5 415.8L462.1 420.9L464.7 429.5L469 439.8L473.3 448.4L477.6 458.8L480.2 465.6L483.6 468.2L495.6 467.3L493.9 474.2L487 484.5L478.4 493.1L468.1 501.7L461.2 510.3L457.8 517.2L457.8 527.5L457.5 531.2L456.9 538.8L453.8 545L447.5 548.8L440 552.5L436.2 556.2L438.1 561.2L436.2 566.2L432.5 570L428.1 572.5L425 579.4L420 585L413.8 590L407.5 593.1L397.5 595L390 596.2L390 590L389.4 580L386.9 570L385 560L384.4 548.8L385 545L388.8 536.2L392.5 526.2L392.5 515L392.5 513.8L389.1 505.2L389.9 500L390.8 493.1L385.6 489.7L378.8 483.7L373.6 483.7L361.6 485.4L349.5 488L342.7 479.4L337.5 470.8L334.1 462.2L335.8 455.3L337.5 448.4L339.2 439.8L344.4 433L349.5 427L358.1 420.9L363.3 414.1L370.2 407.2Z" fill="none" stroke-width="1.15"/>
<g clip-path="url(#cna)"><path d="M75.9 348.4L84.1 345.3L88 341.4L85.2 340.6L84.5 337.5L86.8 334.4L93.4 331.2L99.7 328.1L104.4 327L99.7 325.8L99.3 323.8L102.8 322.3L108.3 321.9L112.6 321.1L114.9 319.9L113.4 316.8L118.4 314.8L124.7 313.3L131.7 310.9L140.3 310.2L147.3 311.3L155.2 312.5L162.2 312.9L175.6 314.1L189.7 312.8L189.4 312.5L198.8 313.9L205.3 317.7L210.9 318.1L217.5 317.2L224.1 318.1L232.5 317.2L238.1 318.1L245.6 314.8L249.4 312.5L254.1 313.4L259.7 310.2L264.4 306.9L267.2 308.8L264.4 314.4L260.6 317.2L255.9 320L251.2 321.9L245.6 325.6L236.2 329.4L226.9 333.1L220.3 336.9L218 340.6L219.4 344.4L225 346.2L229.7 350L232.5 350.9L230.6 354.7L229.2 358L232 359.4L236.2 357L238.1 351.9L245.6 348.1L251.2 342.5L254.1 336.9L257.8 332.2L261.6 330.8L266.2 331.7L269.1 335.9L269.5 339.7L273.8 340.6L278.4 337.3L278.9 342.5L279.4 348.1L284.1 353.8L283.1 357.5L279.4 359.8L275.6 361.2L269.1 362.2L262.5 362.7L257.8 364.1L251.2 365.9L249.4 368.8L255 366.4L259.7 365.9L257.8 369.7L259.7 374.4L257.8 376.2L251.2 375.3L249.4 379.1L247.5 380L236.6 381.6L225.6 389.4L216.2 395.6L214.7 400L203.8 409.4L195.9 417.2L194.4 426.6L191.2 430.5L188.9 425L188.1 417.2L180.3 415.6L172.5 416.4L161.6 420.3L152.2 426.6L147.5 431.2L145.9 442.2L149.1 448.4L153.8 450L160 446.9L163.9 441.4L170.2 442.2L164.7 446.9L163.1 452.3L163.9 457L172.5 457.8L174.1 460.2L173.3 467.2L170.9 471.9L172.5 475.8L175.6 477.3L180.3 475.8L182.7 478.1L181.9 478.9L177.2 479.7L172.5 478.1L167.8 475L164.7 472.7L163.1 468.8L160 464.1L156.9 461.7L152.2 460.9L145.9 457.8L136.6 453.1L128.8 448.4L124.8 442.2L123.3 432.8L120.9 423.4L119.4 415.6L117 414.8L116.2 420.3L117 429.7L117.8 436.7L116.2 433.6L112.3 425L113.1 415.6L113.9 411.7L110 403.4L110.8 392.5L117.8 381.6L124.7 378.1L127.8 374.2L131.7 369.5L129.4 366.4L128.6 362.5L130.2 361.7L131.7 358.6L132.5 354.7L134.1 351.6L136.4 349.2L138.8 347.7L138 345.3L138.8 342.2L140.7 338.3L138.8 336.7L135.2 338.3L133.3 336.7L129.4 336.7L124.7 335.5L120.8 334.4L116.9 335.2L113.8 336.7L109.1 339.1L102.8 340.6L95.8 342.6L89.5 344.5L81.7 346.9L77 348.8Z" fill="#cdb074" stroke="none"/>
<path d="M162.2 312.9L133.3 336.7L132.5 346.9L70 354.7L70 300L162.2 300Z" fill="#a19794"/>
<path d="M133.4 365.9L194.4 365.9L194.1 364.5L197.3 371.6L212.8 372L216.6 374.4L218.4 377.2L217.5 380L215.6 383.8L219.4 383.8L224.1 380.9L230.6 378.1L238.1 375.8L244.7 372.5L247.5 371.6L248.9 374.4L249.4 379.1L255 383.8L263.1 451.9L156.9 428.1L148.3 421.9L145.2 420.3L139.7 419.5L136.6 414.1L130.3 415.6L119.4 414.1L113.9 411.7L97.5 411.7L91.2 365.9Z" fill="#a19794"/>
<path d="M97.5 411.7L113.9 411.7L119.4 414.1L130.3 415.6L136.6 414.1L139.7 419.5L145.2 420.3L148.3 421.9L156.9 428.1L175.6 439.1L166.2 448.4L163.9 452.3L161.6 454.7L158.4 453.1L155.3 456.2L152.2 460.9L141.2 465.6L97.5 446.9Z" fill="#bcc98c"/>
<path d="M152.2 460.9L155.3 456.2L158.4 453.1L161.6 454.7L160 458.6L156.9 462.2L153.8 462.5Z" fill="#a19794"/>
<path d="M161.6 454.7L163.9 452.3L165 453.1L163.9 457L160 458.6Z" fill="#ecdcb8"/>
<path d="M160 458.6L163.9 457L172.5 457L175.6 460.2L167.8 461.7L163.1 462.8L160 461.7Z" fill="#dc9a7e"/>
<path d="M156.9 462.2L160 461.7L163.1 462.8L161.6 464.4L157.7 463.8Z" fill="#cfa968"/>
<path d="M163.1 462.8L167.8 461.7L175.6 460.2L174.1 467.2L171.7 472.2L163.9 469.5L161.6 464.4Z" fill="#a9c193"/>
<path d="M163.9 469.5L171.7 472.2L172.5 476.6L168.6 476.6L163.9 473.4Z" fill="#ecdcb8"/>
<path d="M172.5 476.6L171.7 472.2L177.2 473.4L183.4 475L183.4 480.5L172.5 480.5Z" fill="#dc9a7e"/>
</g>
<path d="M75.9 348.4L84.1 345.3L88 341.4L85.2 340.6L84.5 337.5L86.8 334.4L93.4 331.2L99.7 328.1L104.4 327L99.7 325.8L99.3 323.8L102.8 322.3L108.3 321.9L112.6 321.1L114.9 319.9L113.4 316.8L118.4 314.8L124.7 313.3L131.7 310.9L140.3 310.2L147.3 311.3L155.2 312.5L162.2 312.9L175.6 314.1L189.7 312.8L189.4 312.5L198.8 313.9L205.3 317.7L210.9 318.1L217.5 317.2L224.1 318.1L232.5 317.2L238.1 318.1L245.6 314.8L249.4 312.5L254.1 313.4L259.7 310.2L264.4 306.9L267.2 308.8L264.4 314.4L260.6 317.2L255.9 320L251.2 321.9L245.6 325.6L236.2 329.4L226.9 333.1L220.3 336.9L218 340.6L219.4 344.4L225 346.2L229.7 350L232.5 350.9L230.6 354.7L229.2 358L232 359.4L236.2 357L238.1 351.9L245.6 348.1L251.2 342.5L254.1 336.9L257.8 332.2L261.6 330.8L266.2 331.7L269.1 335.9L269.5 339.7L273.8 340.6L278.4 337.3L278.9 342.5L279.4 348.1L284.1 353.8L283.1 357.5L279.4 359.8L275.6 361.2L269.1 362.2L262.5 362.7L257.8 364.1L251.2 365.9L249.4 368.8L255 366.4L259.7 365.9L257.8 369.7L259.7 374.4L257.8 376.2L251.2 375.3L249.4 379.1L247.5 380L236.6 381.6L225.6 389.4L216.2 395.6L214.7 400L203.8 409.4L195.9 417.2L194.4 426.6L191.2 430.5L188.9 425L188.1 417.2L180.3 415.6L172.5 416.4L161.6 420.3L152.2 426.6L147.5 431.2L145.9 442.2L149.1 448.4L153.8 450L160 446.9L163.9 441.4L170.2 442.2L164.7 446.9L163.1 452.3L163.9 457L172.5 457.8L174.1 460.2L173.3 467.2L170.9 471.9L172.5 475.8L175.6 477.3L180.3 475.8L182.7 478.1L181.9 478.9L177.2 479.7L172.5 478.1L167.8 475L164.7 472.7L163.1 468.8L160 464.1L156.9 461.7L152.2 460.9L145.9 457.8L136.6 453.1L128.8 448.4L124.8 442.2L123.3 432.8L120.9 423.4L119.4 415.6L117 414.8L116.2 420.3L117 429.7L117.8 436.7L116.2 433.6L112.3 425L113.1 415.6L113.9 411.7L110 403.4L110.8 392.5L117.8 381.6L124.7 378.1L127.8 374.2L131.7 369.5L129.4 366.4L128.6 362.5L130.2 361.7L131.7 358.6L132.5 354.7L134.1 351.6L136.4 349.2L138.8 347.7L138 345.3L138.8 342.2L140.7 338.3L138.8 336.7L135.2 338.3L133.3 336.7L129.4 336.7L124.7 335.5L120.8 334.4L116.9 335.2L113.8 336.7L109.1 339.1L102.8 340.6L95.8 342.6L89.5 344.5L81.7 346.9L77 348.8Z" fill="none" stroke-width="1.15"/>
<path d="M197.3 371.6L201.6 369.7L207.2 367.8L211.9 368.8L212.8 372L208.1 371.6L203.4 372.5L198.8 373Z" fill="#e4eefa"/>
<path d="M196.9 386L199.2 380L203 375.3L205.3 376.1L203 380.9L200.4 386Z" fill="#e4eefa"/>
<path d="M208.1 374.4L212.8 373.4L216.6 374.4L218.4 377.2L216.1 379.1L214.2 382.8L211.4 380.5L210 377.2Z" fill="#e4eefa"/>
<path d="M210.2 386.6L212.8 383L216.1 383.8L214.7 386.6Z" fill="#e4eefa"/>
<path d="M219.4 382.3L224.1 380L225 381.1L220.3 383.6Z" fill="#e4eefa"/>
<g clip-path="url(#csa)"><path d="M181.9 478.9L186.6 473.4L192.8 469.5L199.8 467.2L197.5 471.9L203.8 471.1L213.1 472.7L220.9 473.4L224.1 478.1L228.8 481.2L235 485.2L241.2 487.5L243.6 493.8L245.9 501.6L253.8 506.2L263.1 508.6L270.9 512.5L275.6 517.2L274.1 525L267.8 534.4L263.1 540.6L261.6 550L260.3 553.4L255.6 561.2L246.2 565.2L238.4 569.1L235.3 575.3L233.8 581.6L227.5 586.2L224.4 590.9L221.2 597.2L215 598.8L215.8 603.4L210.3 607.3L204.1 608.9L203.3 612.8L199.4 615.2L198.6 619.1L200.9 621.4L196.2 624.5L194.7 629.2L198.6 633.1L194.7 639.4L192.3 642.5L194.7 646.4L203.3 651.1L194.7 651.1L193.1 646.4L186.9 646.4L184.5 639.4L181.4 630L180.6 617.5L178.3 606.6L179.8 592.5L181.4 580L183 567.5L184.5 556.6L185.3 550.3L182.2 547.2L175.9 539.4L172.8 530L170.9 531.2L166.2 521.9L164.7 514.1L167.8 509.4L168.6 503.1L174.1 498.4L177.2 492.2L178.8 484.4Z" fill="#a9c193" stroke="none"/>
<path d="M178.8 478.1L186.6 468.8L203.8 462.5L197.5 471.9L194.4 475L195.2 479.7L202.2 482.8L203 490.6L200.6 493.8L195.2 498.4L194.4 507.8L191.2 507.8L186.6 507L183.4 501.6L178.8 498.4L174.1 498.4L169.4 487.5Z" fill="#cfa968"/>
<path d="M197.5 471.9L199.8 465.6L228.8 468.8L224.1 478.1L222.5 481.2L219.4 484.4L217.8 489.1L211.6 492.2L210 495.3L205.3 496.9L203 490.6L202.2 482.8L195.2 479.7L194.4 475Z" fill="#a19794"/>
<path d="M224.1 478.1L231.9 478.1L228.8 481.2L226.4 487.5L227.2 493.8L222.5 496.9L220.2 492.2L219.4 484.4L222.5 481.2Z" fill="#e6d98c"/>
<path d="M228.8 481.2L233.4 479.7L238.1 484.4L235 485.2L234.2 492.2L228.8 494.5L227.2 493.8L226.4 487.5Z" fill="#ecdcb8"/>
<path d="M235 485.2L238.1 482.8L245.9 487.5L239.7 492.2L235.8 493.8L234.2 492.2Z" fill="#a19794"/>
<path d="M174.1 498.4L178.8 498.4L183.4 501.6L178.8 507.8L172.5 510.9L169.4 512.5L163.1 515.6L161.6 501.6Z" fill="#b9cd9a"/>
<path d="M156.9 515.6L169.4 512.5L172.5 510.9L178.8 507.8L183.4 501.6L186.6 507L191.2 507.8L191.2 512.5L185 515.6L181.9 520.3L183.4 526.6L188.1 528.1L191.2 532.8L189.7 540.6L191.2 546.9L188.9 550.8L187.7 548.8L185.3 550.3L171.2 551.9L163.4 530Z" fill="#dc9a7e"/>
<path d="M187.7 550.3L190 539.4L186.9 533.1L188.4 526.9L191.2 532.8L199.1 528.1L202.2 534.4L210 539.1L213.1 545.3L217.8 548.4L215.8 550.3L215 555L208.8 554.2L204.8 557.3L203.3 562L197.8 562.8L193.9 562L190.8 563.6L188.4 558.1Z" fill="#c6c88c"/>
<path d="M204.8 557.3L208.8 554.2L215 555L216.6 561.2L221.2 565.9L222.8 571.4L218.1 575.3L214.2 576.1L215 570.6L208.8 566.7L203.3 562Z" fill="#ecc9a8"/>
<path d="M215 584.7L221.2 587.8L227.5 590.9L224.4 598.8L215 597.2L212.7 592.5L213.4 587.8Z" fill="#dcc880"/>
<path d="M190.8 563.6L193.9 562L197.8 562.8L203.3 562L208.8 566.7L215 570.6L214.2 576.1L218.1 575.3L222.8 571.4L221.2 576.9L216.6 583.1L215 584.7L213.4 587.8L212.7 592.5L215 597.2L227.5 601.9L227.5 655L193.1 655L192.3 642.5L186.9 639.4L185.3 630L184.5 617.5L183 605L184.5 592.5L186.1 580L188.4 569.1Z" fill="#a19794"/>
<path d="M185.3 550.3L187.7 550.3L188.4 558.1L190.8 563.6L188.4 569.1L186.1 580L184.5 592.5L183 605L184.5 617.5L185.3 630L186.9 639.4L192.3 642.5L193.1 655L171.2 655L171.2 550.3Z" fill="#c6c88c"/>
</g>
<path d="M181.9 478.9L186.6 473.4L192.8 469.5L199.8 467.2L197.5 471.9L203.8 471.1L213.1 472.7L220.9 473.4L224.1 478.1L228.8 481.2L235 485.2L241.2 487.5L243.6 493.8L245.9 501.6L253.8 506.2L263.1 508.6L270.9 512.5L275.6 517.2L274.1 525L267.8 534.4L263.1 540.6L261.6 550L260.3 553.4L255.6 561.2L246.2 565.2L238.4 569.1L235.3 575.3L233.8 581.6L227.5 586.2L224.4 590.9L221.2 597.2L215 598.8L215.8 603.4L210.3 607.3L204.1 608.9L203.3 612.8L199.4 615.2L198.6 619.1L200.9 621.4L196.2 624.5L194.7 629.2L198.6 633.1L194.7 639.4L192.3 642.5L194.7 646.4L203.3 651.1L194.7 651.1L193.1 646.4L186.9 646.4L184.5 639.4L181.4 630L180.6 617.5L178.3 606.6L179.8 592.5L181.4 580L183 567.5L184.5 556.6L185.3 550.3L182.2 547.2L175.9 539.4L172.8 530L170.9 531.2L166.2 521.9L164.7 514.1L167.8 509.4L168.6 503.1L174.1 498.4L177.2 492.2L178.8 484.4Z" fill="none" stroke-width="1.15"/>
<path d="M199.2 309.2L201.6 306.9L208.1 305L215.6 303.6L220.3 304.1L221.2 307.3L226.9 308.8L230.6 306.4L234.4 305.5L235.3 308.8L233.4 312.5L235.3 314.4L232.5 315.8L226.9 315.3L221.2 315.8L215.6 314.8L210.9 315.3L207.2 314.4L209.1 312L210.9 310.2L207.2 308.8L202.5 310.2Z" fill="#cdb074" stroke-width="1.05"/>
<path d="M218.4 299.4L223.1 297.5L229.7 297L232.5 298.9L238.1 299.4L241.9 299.8L240.9 301.7L234.4 301.7L228.8 301.2L225 302.2L221.2 300.3Z" fill="#cdb074" stroke-width="1.05"/>
<path d="M241.4 307.3L245.6 304.5L249.8 304.1L251.2 305.9L249.4 308.8L247.5 310.2L244.7 309.7Z" fill="#cdb074" stroke-width="1.05"/>
<path d="M266.2 300.3L272.8 298.4L279.4 298.9L284.1 300.3L281.2 302.7L273.8 303.1L268.1 302.7Z" fill="#cdb074" stroke-width="1.05"/>
<path d="M273.8 292.8L279.4 290L288.8 287.2L296.9 287.8L312.5 286.2L326.6 287L318.8 289.4L309.4 291.7L300 294.8L290.6 295.6L285 297.5L278.4 297L274.7 295.2Z" fill="#cdb074" stroke-width="1.05"/>
<path d="M267.2 308.8L270 306.4L275.6 306.4L282.2 305.5L285 307.8L289.7 309.7L293.4 313.4L291.6 317.2L295.3 320.9L292.5 323.8L286.9 322.8L285.9 327.5L281.7 329.4L278.4 328.4L279.4 332.2L275.6 331.2L272.8 327.5L270 325.6L264.4 326.1L263.4 325.2L269.1 323.3L274.7 321.9L278.4 319.1L277.5 315.3L273.8 313L268.1 312.5Z" fill="#cdb074" stroke-width="1.05"/>
<path d="M245.6 327.5L249.4 323.8L253.1 322.8L255 326.1L254.1 328.4L249.4 327.5L247 328.9Z" fill="#cdb074" stroke-width="1.05"/>
<path d="M257.1 293.8L258.8 293.6L258.9 294.7L257.2 294.9Z" fill="#8f8884" stroke-width="1.05"/>
<path d="M261.1 294L263 293.9L263.1 295.1L261.2 295.2Z" fill="#8f8884" stroke-width="1.05"/>
<path d="M266.7 295.2L268.9 295.2L268.9 296.4L266.8 296.4Z" fill="#8f8884" stroke-width="1.05"/>
<path d="M248.4 298.9L250.8 298.7L250.9 299.9L248.6 300.1Z" fill="#8f8884" stroke-width="1.05"/>
<path d="M254.1 299.2L256.9 299.2L256.9 300.3L254.2 300.5Z" fill="#8f8884" stroke-width="1.05"/>
<path d="M261.8 298.2L264.4 298.2L264.4 299.4L261.9 299.6Z" fill="#8f8884" stroke-width="1.05"/>
<path d="M259.2 301.6L261.6 301.4L261.8 302.6L259.4 302.8Z" fill="#8f8884" stroke-width="1.05"/>
<path d="M264.8 301.2L267.7 301.1L267.8 302.2L265 302.4Z" fill="#8f8884" stroke-width="1.05"/>
<path d="M240 295.2L244.7 294.9L244.5 296.4L240.2 296.6Z" fill="#cdb074" stroke-width="1.05"/>
<path d="M268.6 370.2L273.8 365L278.4 360.3L279.8 361.2L278.4 365L283.1 364.1L282.7 367.8L280.8 371.6L277.5 370.6L273.8 370.2Z" fill="#cdb074" stroke-width="1.05"/>
<path d="M305.5 296.4L309.4 293.3L325 290.2L340.6 287.8L356.2 286.2L371.9 285.9L387.5 286.2L397.7 288.6L387.5 293.3L382.8 297.2L379.7 303.4L371.9 308.1L368.8 312L362.5 313.6L356.2 315.9L345.3 319.1L337.5 325.3L328.1 331.6L320.3 337L315.6 335.5L311.7 330L310.9 323.8L314.1 317.5L319.5 313.6L318.8 309.7L321.1 305L318.8 300.3L312.5 299.5L306.2 298.8Z" fill="#c69d6c" stroke-width="1.05"/>
<path d="M364.1 323.8L368.8 321.4L376.6 323L382 322.2L382.8 324.5L376.6 327.7L370.3 328.4L365.6 326.9Z" fill="#c69d6c" stroke-width="1.05"/>
<path d="M176.4 439.8L181.9 437.5L188.1 438.3L194.4 442.2L199.8 446.1L195.2 446.9L191.2 443.8L185 440.6L178.8 440.9Z" fill="#dc9a7e" stroke-width="1.05"/>
<path d="M200.6 446.9L206.9 446.1L211.6 449.2L206.9 452.3L201.4 451.6L199.8 450Z" fill="#cfa968" stroke-width="1.05"/>
<path d="M189.7 450L193.6 449.7L193.1 451.9L190 451.9Z" fill="#8f8884" stroke-width="1.05"/>
<path d="M214.4 450L217.8 450L217.8 451.7L214.4 451.7Z" fill="#8f8884" stroke-width="1.05"/>
<path d="M413.1 581.9L415.6 580.6L417.8 582.2L416.9 584.8L414 585.4L412.5 583.8Z" fill="#ecdcb8" stroke-width="1.05"/>
<path d="M424.4 573.1L426.2 572.5L427.2 574.4L426 576L424.2 575.2Z" fill="#ecdcb8" stroke-width="1.05"/>
<path d="M477.5 535L478.8 538.8L476.2 547.5L471.2 557.5L466.2 566.2L461.2 571.2L456.9 570.6L455.6 565L458.8 558.8L461.2 550L465 545L472.5 540Z" fill="#cfa968" stroke-width="1.05"/>
<path d="M390.9 343.9L393.3 341.6L397.2 341.2L398.8 343.1L396.8 345.5L398.4 347.8L399.9 350.2L398.8 351.7L401.1 353.3L402.7 355.6L403.4 358L402.3 359.9L398.8 360.7L394.1 360.5L390.2 361.1L389.4 359.9L391.7 358.4L390.5 356.8L391.7 354.8L393.3 353.7L391.7 351.7L392.5 348.6L390.5 346.6Z" fill="#cfa968" stroke-width="1.05"/>
<path d="M380 353.3L383.1 350.5L387.4 349.8L389 351.3L387.4 354.5L384.7 356.8L380.8 358.4L379.2 356.8Z" fill="#cfa968" stroke-width="1.05"/>
<path d="M417.5 395.9L423 395.1L422.6 398.6L419.1 398.2Z" fill="#dc9a7e" stroke-width="1.05"/>
<path d="M409.7 388.4L412 386.9L412.8 391.6L410.5 393.5L409.3 391.6Z" fill="#8f8884" stroke-width="1.05"/>
<path d="M411.2 383.8L412.8 383.4L412.8 386.1L411.6 386.5Z" fill="#8f8884" stroke-width="1.05"/>
<path d="M440.2 400.2L444.8 399.8L444.5 401.3L440.5 401.7Z" fill="#ecc9a8" stroke-width="1.05"/>
<path d="M693.4 353L695.3 352.5L700.5 363.1L706.7 376.4L705.2 377.5L698.9 364.7Z" fill="#b4bc84" stroke-width="1.05"/>
<path d="M704.4 376.6L707.5 377.8L711.9 378.8L714.4 380L714.7 382.2L711.9 382.8L710 385L707.5 384.1L705 385.6L703.8 383.8L704.1 381.2L705.6 379.4Z" fill="#aca29e" stroke-width="1.05"/>
<path d="M706.2 387.5L708.8 388.1L710.6 390.6L711.2 395L710.6 398.8L710 403.1L708.1 405L705 405.6L703.1 405L702.5 407.5L700 408.8L698.8 406.2L696.2 405L693.8 405.6L691.2 407.5L689.4 409.4L687.5 410L689.4 408.1L691.2 405.6L693.8 403.8L696.9 403.1L700 401.9L701.2 398.8L703.8 396.9L705.6 393.8L706.2 390.6Z" fill="#aca29e" stroke-width="1.05"/>
<path d="M687.5 410L689.4 409.4L691.9 409.4L692.5 411.2L691.2 413.8L690 415L688.8 413.8L688.1 411.9Z" fill="#aca29e" stroke-width="1.05"/>
<path d="M692.5 407.5L695 406.6L696.9 406.9L696.2 408.4L693.8 409.1Z" fill="#aca29e" stroke-width="1.05"/>
<path d="M678.1 395.9L680.6 395L683.1 396.9L684.7 400L684.7 403.1L682.5 404.7L679.4 405L678.1 402.5L677.8 398.8Z" fill="#ecdcb8" stroke-width="1.05"/>
<path d="M667.7 431.9L670 431.9L669.2 438.9L666.6 438.9Z" fill="#cfa968" stroke-width="1.05"/>
<path d="M564.4 476.6L567.5 475L569.1 479.7L566.7 485.2L564.4 482.8Z" fill="#c9b073" stroke-width="1.05"/>
<path d="M650.6 438.9L654.2 438.1L654.7 440.9L651.1 441.2Z" fill="#8f8884" stroke-width="1.05"/>
<path d="M705 531.1L707 541.2L707.8 552.2L711.7 560L713.3 567.8L714.8 570.9L711.7 578.8L707.8 586.6L701.6 592.8L693.8 599.1L685.9 605.3L678.1 608.4L673.4 606.9L668.8 607.7L665.6 603.8L665.6 597.5L667.2 592.8L662.5 597.5L659.4 592.8L657.8 588.9L650 588.1L640.6 589.7L631.2 594.4L623.4 595.2L617.2 598.3L612.5 595.9L615.6 591.2L619.5 585L620.3 575.6L623.4 567.8L625 563.1L635.9 558.4L645.3 554.5L650 549.1L656.2 544.4L662.5 539.7L670.3 538.9L675 535L681.2 533.4L689.1 535L685.9 540.5L690.6 545.9L695.3 549.1L700 541.2L703.1 533.4Z" fill="#d4977b" stroke-width="1.05"/>
<path d="M667.2 613.9L673.4 612.3L675 614.7L670.3 620.2L665.6 620.9L664.8 617.8Z" fill="#d4977b" stroke-width="1.05"/>
<path d="M744.5 596.7L746.9 599.1L746.1 603.8L750.8 605.3L745.3 608.4L740.6 611.6L735.9 614.7L736.7 610L741.4 606.9L743 602.2Z" fill="#bcd0b4" stroke-width="1.05"/>
<path d="M732.8 613.9L733.6 616.2L725 620.9L715.6 625.6L706.2 629.5L703.1 628L709.4 624.1L718.8 619.4L726.6 615.5Z" fill="#bcd0b4" stroke-width="1.05"/>
<path d="M666.7 450.6L670.6 450.3L669.8 456.9L672.2 463.1L674.5 463.9L667.5 462.3L665.2 456.9Z" fill="#dc9a7e" stroke-width="1.05"/>
<path d="M670.6 475.6L677.7 474.8L678.4 480.3L673.8 485L669.1 480.3Z" fill="#dc9a7e" stroke-width="1.05"/>
<path d="M669.1 467.8L672.2 467L673.8 470.9L670.6 472.5Z" fill="#dc9a7e" stroke-width="1.05"/>
<path d="M673.8 466.2L676.1 465.9L676.6 470.2L674.7 470.6Z" fill="#dc9a7e" stroke-width="1.05"/>
<path d="M656.2 476.9L662.8 470.6L663.4 471.2L656.9 477.5Z" fill="#8f8884" stroke-width="1.05"/>
<path d="M601.1 486.6L605.8 485.8L612.8 495.9L619.1 502.2L622.2 508.4L621.4 516.2L617.5 517.8L611.2 510L606.6 499.1L601.9 491.2Z" fill="#a19794" stroke-width="1.05"/>
<path d="M632.3 497.5L639.4 494.4L647.2 488.1L655 481.9L659.7 486.6L655 489.7L656.6 497.5L653.4 503.8L647.2 510L642.5 512.3L636.2 510L632.3 505.3Z" fill="#a19794" stroke-width="1.05"/>
<path d="M634.7 496.7L639.4 494.4L647.2 488.1L655 481.9L659.7 486.6L655 489.7L650.3 491.2L645.6 495.2L639.4 499.1Z" fill="#b9cd9a" stroke-width="1.05"/>
<path d="M657.3 500.6L662.8 497.5L671.4 495.9L669.8 499.8L662.8 500.6L659.7 505.3L664.4 510L662.8 514.7L659.7 510L657.3 516.2L654.2 514.7L655 506.9Z" fill="#a19794" stroke-width="1.05"/>
<path d="M619.1 518.6L626.9 519.4L637.8 521.7L639.4 524.8L631.6 524.1L622.2 521.7Z" fill="#a19794" stroke-width="1.05"/>
<path d="M641.7 524.4L647.2 524.1L647.5 525.9L642.2 526.2Z" fill="#8f8884" stroke-width="1.05"/>
<path d="M649.5 526.4L653.4 525.9L653.8 527.8L650 528.4Z" fill="#8f8884" stroke-width="1.05"/>
<path d="M659.7 526.4L666.7 523.8L667.5 525.3L660.9 528.8Z" fill="#8f8884" stroke-width="1.05"/>
<path d="M673.8 503.8L676.1 497.5L677.7 498.3L675.6 505.3Z" fill="#8f8884" stroke-width="1.05"/>
<path d="M669.8 505.6L675.3 506.9L675 508.4L669.7 507.2Z" fill="#8f8884" stroke-width="1.05"/>
<path d="M677.7 494.4L680 493.6L680 497.5L678.1 497.5Z" fill="#8f8884" stroke-width="1.05"/>
<path d="M683.9 503.8L689.4 502.2L694.1 506.9L700.3 505.3L708.1 510L705 525.6L698.8 522.5L697.2 517.8L692.5 511.6L687.8 510L684.7 506.9Z" fill="#a19794" stroke-width="1.05"/>
<path d="M708.1 510L715.9 513.1L721.4 517.8L719.1 522.5L723.8 528L726.9 530.3L720.6 529.5L715.9 525.6L709.7 526.4L705 525.6Z" fill="#ecdcb8" stroke-width="1.05"/>
<path d="M723.8 516.2L730.8 514.4L733.9 510L735.5 510.8L732.3 516.2L724.5 518.6Z" fill="#8f8884" stroke-width="1.05"/>
<path d="M746.9 556.9L748.8 556.1L752.3 561.9L750.8 562.8Z" fill="#8f8884" stroke-width="1.05"/>
<path d="M611.2 480.3L616.7 483.4L620.6 491.2L621.4 497.5L618.3 498.3L614.4 491.2L612 485Z" fill="#a9c193" stroke-width="1.05"/>
</g>
<g fill="#22221a"><circle cx="740.2" cy="516.2" r="0.7"/><circle cx="743.3" cy="520.2" r="0.7"/><circle cx="746.4" cy="523.3" r="0.7"/><circle cx="749.5" cy="526.4" r="0.7"/><circle cx="751.9" cy="530" r="0.7"/><circle cx="760.2" cy="543.6" r="0.7"/><circle cx="761.7" cy="547.5" r="0.7"/><circle cx="760.9" cy="551.4" r="0.7"/><circle cx="760.9" cy="555.3" r="0.7"/><circle cx="783.6" cy="550.6" r="0.7"/><circle cx="788.3" cy="547" r="0.7"/><circle cx="225.6" cy="457.8" r="0.7"/><circle cx="226.4" cy="460.9" r="0.7"/><circle cx="226.4" cy="464.1" r="0.7"/><circle cx="225.9" cy="467.2" r="0.7"/><circle cx="222.5" cy="471.1" r="0.7"/><circle cx="195.2" cy="432.8" r="0.7"/><circle cx="199.1" cy="431.2" r="0.7"/><circle cx="212.7" cy="642.5" r="0.7"/><circle cx="214" cy="644" r="0.7"/><circle cx="546.4" cy="485.9" r="0.7"/><circle cx="545.6" cy="490.6" r="0.7"/><circle cx="545.3" cy="495.3" r="0.7"/><circle cx="544.8" cy="499.2" r="0.7"/><circle cx="727.8" cy="363.1" r="0.7"/><circle cx="726.2" cy="367" r="0.7"/><circle cx="723.9" cy="370.9" r="0.7"/><circle cx="720.8" cy="374.8" r="0.7"/><circle cx="717.7" cy="378" r="0.7"/><circle cx="316.9" cy="458.8" r="0.7"/><circle cx="314.3" cy="460.1" r="0.7"/><circle cx="317.7" cy="460.8" r="0.7"/><circle cx="463.8" cy="533.1" r="0.7"/><circle cx="466.9" cy="536.2" r="0.7"/><circle cx="397.5" cy="391.9" r="0.7"/><circle cx="393.1" cy="393.1" r="0.7"/><circle cx="778.8" cy="477.8" r="0.7"/><circle cx="782.5" cy="482" r="0.7"/><circle cx="787.5" cy="479" r="0.7"/><circle cx="788.8" cy="496.5" r="0.7"/><circle cx="791.2" cy="500.8" r="0.7"/><circle cx="795" cy="505.2" r="0.7"/><circle cx="796.2" cy="522.8" r="0.7"/><circle cx="772.5" cy="504" r="0.7"/><circle cx="712.5" cy="314" r="0.7"/></g>
<g font-family="Liberation Sans,sans-serif" font-weight="bold" fill="#15150f" stroke="#15150f" stroke-width="0.18" text-anchor="middle">
<text x="183" y="344" font-size="4">Canada</text>
<text x="159.5" y="395" font-size="4.3">United States</text>
<text x="136.5" y="436" font-size="4.3">Mexico</text>
<text x="345" y="307" font-size="3.2">Greenland</text>
<text x="381" y="330.5" font-size="3">Iceland</text>
<text x="372" y="347" font-size="4">United Kingdom</text>
<text x="372" y="354" font-size="3">Ireland</text>
<text x="400" y="371" font-size="4.2">France</text>
<text x="384" y="390" font-size="3.8">Spain</text>
<text x="362" y="391" font-size="3">Portugal</text>
<text x="418" y="392" font-size="3.8">Italy</text>
<text x="420" y="359" font-size="3.4">Germany</text>
<text x="421" y="335" font-size="3">Norway</text>
<text x="409" y="348" font-size="3">Denmark</text>
<text x="356" y="413" font-size="3">Morocco</text>
<text x="389" y="424" font-size="3.2">Algeria</text>
<text x="423" y="426" font-size="3.2">Libya</text>
<text x="451" y="427" font-size="3.2">Egypt</text>
<text x="340" y="432" font-size="3.2">Western Sahara</text>
<text x="349" y="448" font-size="3.2">Mauritania</text>
<text x="370" y="454" font-size="3.2">Mali</text>
<text x="398" y="454" font-size="3.2">Niger</text>
<text x="418" y="459" font-size="3.2">Chad</text>
<text x="443" y="462" font-size="3.2">Sudan</text>
<text x="388" y="476" font-size="3.8">Nigeria</text>
<text x="466" y="477" font-size="3.2">Ethiopia</text>
<text x="458" y="499.5" font-size="3.2">Kenya</text>
<text x="418" y="509" font-size="3.2">Congo DR</text>
<text x="446" y="519" font-size="3.2">Tanzania</text>
<text x="402" y="535" font-size="3.2">Angola</text>
<text x="422" y="540" font-size="3.2">Zambia</text>
<text x="394" y="559.5" font-size="3.2">Namibia</text>
<text x="410" y="562" font-size="3.2">Botswana</text>
<text x="427" y="553" font-size="3.2">Zimbabwe</text>
<text x="446" y="553" font-size="3.2">Mozambique</text>
<text x="410" y="599" font-size="3.8">South Africa</text>
<text x="427.5" y="578.5" font-size="2.8">Swaziland</text>
<text x="422" y="586" font-size="2.8">Lesotho</text>
<text x="480" y="557.5" font-size="3.2">Madagascar</text>
<text x="494" y="486" font-size="3">Somalia</text>
<text x="488" y="433" font-size="3.2">Saudi Arabia</text>
<text x="491" y="458" font-size="3.2">Yemen</text>
<text x="519" y="448" font-size="3">Oman</text>
<text x="581" y="334" font-size="4">Russia</text>
<text x="542.5" y="370" font-size="3.2">Kazakhstan</text>
<text x="618" y="373" font-size="3.2">Mongolia</text>
<text x="620" y="405" font-size="4">China</text>
<text x="569" y="439" font-size="3.6">India</text>
<text x="576" y="481" font-size="3">Sri Lanka</text>
<text x="690" y="392" font-size="3">North Korea</text>
<text x="677" y="408" font-size="3">South Korea</text>
<text x="705" y="411" font-size="3.4">Japan</text>
<text x="676" y="437" font-size="3">Taiwan</text>
<text x="684" y="463.5" font-size="3">Philippines</text>
<text x="630" y="491.5" font-size="3">Malaysia</text>
<text x="659" y="519" font-size="3">Indonesia</text>
<text x="729" y="533" font-size="3">Papua New Guinea</text>
<text x="669" y="571" font-size="4">Australia</text>
<text x="724" y="609.5" font-size="3">New Zealand</text>
<text x="226" y="520" font-size="4.4">Brazil</text>
<text x="188" y="491" font-size="3.2">Colombia</text>
<text x="208" y="481" font-size="3.2">Venezuela</text>
<text x="175" y="525" font-size="3.2">Peru</text>
<text x="198" y="548" font-size="3.2">Bolivia</text>
<text x="198" y="591.5" font-size="3.2">Argentina</text>
<text x="175" y="593.5" font-size="3.2">Chile</text>
<text x="228" y="599" font-size="3.2">Uruguay</text>
<text x="161" y="503" font-size="3">Ecuador</text>
<text x="183" y="444" font-size="3">Cuba</text>
<text x="222" y="447" font-size="2.8">Dominican Republic</text>
<text x="217" y="455" font-size="2.8">Puerto Rico</text>
<text x="201" y="454.5" font-size="2.8">Haiti</text>
<text x="182" y="452.5" font-size="2.8">Jamaica</text>
<text x="179" y="456.5" font-size="2.8">Honduras</text>
<text x="180" y="466.5" font-size="2.8">Nicaragua</text>
<text x="142" y="462" font-size="2.8">Guatemala</text>
<text x="149" y="466" font-size="2.8">El Salvador</text>
<text x="157" y="477.5" font-size="2.8">Costa Rica</text>
<text x="169" y="482.5" font-size="2.8">Panama</text>
<text x="168" y="453" font-size="2.8">Belize</text>
<text x="234" y="473" font-size="2.8">Trinidad and Tobago</text>
<text x="231" y="481" font-size="2.6">Guyana</text>
<text x="238" y="484" font-size="2.6">Suriname</text>
<text x="251" y="487" font-size="2.8">French Guiana</text>
<text x="223" y="647.5" font-size="2.8">Falkland Islands</text>
<text x="422" y="406.5" font-size="3">Tunisia</text>
<text x="432" y="402.5" font-size="3">Greece</text>
<text x="447" y="376" font-size="3">Romania</text>
<text x="326" y="458" font-size="3">Senegal</text>
<text x="321" y="474" font-size="3">Guinea</text>
<text x="325" y="482" font-size="3">Sierra Leone</text>
<text x="329" y="487" font-size="3">Liberia</text>
<text x="359" y="489" font-size="3">Ivory Coast</text>
<text x="378" y="496" font-size="2.6">Equatorial Guinea</text>
<text x="395" y="503" font-size="3">Gabon</text>
<text x="520" y="383" font-size="3">Uzbekistan</text>
<text x="519" y="392" font-size="3">Turkmenistan</text>
<text x="567" y="384" font-size="3">Kyrgyzstan</text>
<text x="589.5" y="444" font-size="3">Bangladesh</text>
<text x="578" y="427.8" font-size="2.8">Nepal</text>
<text x="595" y="422" font-size="2.8">Bhutan</text>
<text x="656" y="445" font-size="3">Hong Kong</text>
<text x="402" y="377" font-size="3.4">Switzerland</text>
<text x="407.5" y="355" font-size="3">Netherlands</text>
<text x="398.5" y="359" font-size="3">Belgium</text>
<text x="418.5" y="365.3" font-size="3">Czech Rep</text>
<text x="420.5" y="370.5" font-size="2.8">Austria</text>
<text x="436.5" y="372.3" font-size="2.8">Hungary</text>
<text x="450" y="383.3" font-size="2.8">Bulgaria</text>
<text x="790" y="552.5" font-size="2.8">Fiji</text>
<text x="680" y="527" font-size="2.8">East Timor</text>
<text x="640" y="486.5" font-size="2.8">Brunei</text>
<text x="625" y="500" font-size="2.6">Singapore</text>
</g>
<circle cx="456" cy="346.6" r="26.7" fill="#fe0000"/>
<circle cx="484.15" cy="399.8" r="26.75" fill="#fe0000"/>
<circle cx="624.1" cy="455.7" r="26.9" fill="#fe0000"/>
<circle cx="546.3" cy="419.2" r="25.75" fill="#fff" fill-opacity="0.95" stroke="#5a5a5a" stroke-width="1.7"/>
</svg>
</div>

<div id="next">Next</div>
<div id="reset">Reset</div>

<div id="footer">
  <div id="logo">edmentum</div>
  <div class="abs" style="left:19px;top:20px;width:110px;height:3px;mix-blend-mode:screen;background:linear-gradient(90deg,#2aa9e0 0,#2aa9e0 10%,#f5c400 16%,#e8452c 24%,#d6187c 38%,#d6187c 50%,#7ab800 58%,#2aa9e0 68%,#f5c400 78%,#e8452c 86%,#7ab800 93%,#2aa9e0 100%)"></div>
  <div id="copy">© 2017 Edmentum. All rights reserved.</div>
</div>

<div id="sb">
  <div class="abs" style="left:0;top:0;width:17px;height:34px;background:#74a9de"></div>
  <svg class="abs" style="left:2px;top:17px" width="13" height="10" viewBox="0 0 13 10"><path d="M1 8l5.500-5.500L12 8" fill="none" stroke="#1d4370" stroke-width="2.200"/></svg>
  <div class="abs" style="left:0;top:34px;width:17px;height:853px;background:#cdcdcd"></div>
  <div class="abs" style="left:16px;top:0;width:1px;height:47px;background:#3a6fa8"></div>
  <svg class="abs" style="left:2px;top:902px" width="13" height="10" viewBox="0 0 13 10"><path d="M1 2l5.500 5.500L12 2" fill="none" stroke="#5a5a5a" stroke-width="2.800"/></svg>
</div>

<div id="task">
  <svg class="abs" style="left:16px;top:12px" width="16.200" height="16" viewBox="0 0 17 17"><path d="M0 2.400l7-1v6.800H0zM7.800 1.300L17 0v8.200H7.800zM0 9h7v6.700l-7-1zM7.800 9H17v8l-9.200-1.300z" fill="#fff"/></svg>
  <div class="abs" style="left:51px;top:0;width:48px;height:40px;background:#333538"></div>
  <div class="abs" style="left:51px;top:38px;width:46px;height:2px;background:#76b9ed"></div>
  <svg class="abs" style="left:62px;top:6px" width="28" height="28" viewBox="0 0 28 28">
    <defs><linearGradient id="ieg" x1="0" y1="0" x2="0" y2="1"><stop offset="0" stop-color="#63d0f7"/><stop offset="1" stop-color="#1f9fe0"/></linearGradient></defs>
    <circle cx="14.800" cy="15" r="9.600" fill="url(#ieg)"/>
    <path d="M10.500 14.600h15v2.700h-15a1.300 1.300 0 0 1 0-2.700z" fill="#333538"/>
    <path d="M25.500 17.300h-6l5 4.600z" fill="#333538"/>
    <path d="M11.500 11.300a3.600 2.600 0 0 1 7 0z" fill="#333538" opacity=".55"/>
    <path d="M3.200 24.200C-.5 17 8 6.500 23 2.600c2 .2 2.200 1.600 1 2.600" fill="none" stroke="#f3c531" stroke-width="2" stroke-linecap="round"/>
  </svg>
  <svg class="abs" style="left:1096px;top:10px" width="70" height="22" viewBox="0 0 70 22">
    <path d="M1.500 12.500L7 7l5.500 5.500" fill="none" stroke="#fff" stroke-width="1.200"/>
    <rect x="27.500" y="4.500" width="11" height="8" fill="none" stroke="#fff" stroke-width="1.100"/><path d="M33 12.500v3M29 15.500h8" stroke="#fff" stroke-width="1.100"/><rect x="23.500" y="5.500" width="4" height="4" fill="#06070a" stroke="#fff" stroke-width="1"/><path d="M25.500 9.500v6h4" fill="none" stroke="#fff" stroke-width="1.100"/>
    <path d="M48.500 8.500h2.500l3.500-3v10l-3.500-3h-2.500z" fill="none" stroke="#fff" stroke-width="1.100"/><path d="M56.500 8.200a3 3 0 0 1 0 4.600M58.500 6.200a6 6 0 0 1 0 8.600" fill="none" stroke="#fff" stroke-width="1.100"/><path d="M60.500 4.200a9 9 0 0 1 0 12.600" fill="none" stroke="#777" stroke-width="1.100"/>
  </svg>
  <div class="t" style="left:1173px;top:4px;width:44px;text-align:center">4:19 PM</div>
  <div class="t" style="left:1169px;top:22px;width:52px;text-align:center">4/5/2017</div>
  <svg class="abs" style="left:1238px;top:11px" width="20" height="19" viewBox="0 0 20 19"><path d="M2.500 2.500h15v11h-5.500l-2 2-2-2H2.500z" fill="none" stroke="#fff" stroke-width="1.200"/></svg>
  <div class="abs" style="left:1275px;top:0;width:1px;height:40px;background:#555"></div>
</div>
</body>
</html>
